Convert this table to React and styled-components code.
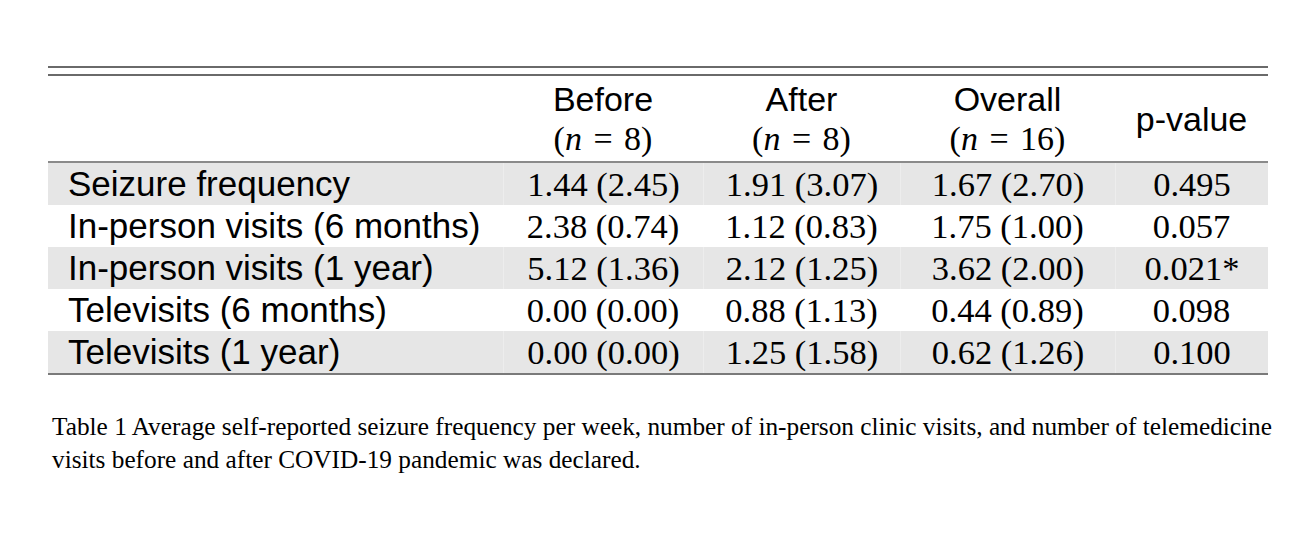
import React from "react";
import styled, { createGlobalStyle } from "styled-components";

const GlobalStyle = createGlobalStyle`
  html, body {
    margin: 0;
    padding: 0;
    background: #ffffff;
  }
  body {
    font-family: "Liberation Serif", "Times New Roman", serif;
    color: #000;
  }
`;

const rows = [
  { label: "Seizure frequency", before: "1.44 (2.45)", after: "1.91 (3.07)", overall: "1.67 (2.70)", p: "0.495" },
  { label: "In-person visits (6 months)", before: "2.38 (0.74)", after: "1.12 (0.83)", overall: "1.75 (1.00)", p: "0.057" },
  { label: "In-person visits (1 year)", before: "5.12 (1.36)", after: "2.12 (1.25)", overall: "3.62 (2.00)", p: "0.021*" },
  { label: "Televisits (6 months)", before: "0.00 (0.00)", after: "0.88 (1.13)", overall: "0.44 (0.89)", p: "0.098" },
  { label: "Televisits (1 year)", before: "0.00 (0.00)", after: "1.25 (1.58)", overall: "0.62 (1.26)", p: "0.100" },
];

const groups = [
  { name: "Before", n: "8" },
  { name: "After", n: "8" },
  { name: "Overall", n: "16" },
];

const Page = styled.main`
  padding: 66px 0 0 48px;
  width: 1268px;
`;

const Table = styled.div`
  width: 1220px;
  display: grid;
  grid-template-columns: 455px 200px 197px 215px 153px;
  border-bottom: 2px solid #7a7a7a;
`;

const DoubleRule = styled.div`
  grid-column: 1 / -1;
  height: 6px;
  border-top: 2px solid #6a6a6a;
  border-bottom: 2px solid #6a6a6a;
`;

const HeadCell = styled.div`
  height: 83px;
  border-bottom: 2px solid #8a8a8a;
  display: flex;
  flex-direction: column;
  align-items: center;
  justify-content: center;
  padding-top: 2px;
`;

const HeadName = styled.span`
  font-family: "Liberation Sans", Arial, sans-serif;
  font-size: 34px;
  line-height: 39px;
`;

const HeadCount = styled.span`
  font-family: "Liberation Serif", "Times New Roman", serif;
  font-size: 34px;
  line-height: 40px;
  word-spacing: 3px;

  i {
    font-style: italic;
  }
`;

const Cell = styled.div`
  height: 42px;
  display: flex;
  align-items: center;
  justify-content: ${(p) => (p.$label ? "flex-start" : "center")};
  padding-left: ${(p) => (p.$label ? "20px" : "0")};
  background: ${(p) => (p.$shade ? "#e6e6e6" : "#ffffff")};
  border-left: ${(p) => (p.$label || !p.$shade ? "none" : "1px solid #ededed")};
  font-family: ${(p) =>
    p.$label ? '"Liberation Sans", Arial, sans-serif' : '"Liberation Serif", "Times New Roman", serif'};
  font-size: ${(p) => (p.$label ? "35px" : "34.5px")};
  white-space: nowrap;
`;

const Caption = styled.p`
  margin: 35px 0 0 4px;
  width: 1240px;
  font-family: "Liberation Serif", "Times New Roman", serif;
  font-size: 25.3px;
  line-height: 33px;
  white-space: nowrap;
`;

export default function App() {
  return (
    <>
      <GlobalStyle />
      <Page>
        <Table>
          <DoubleRule />
          <HeadCell />
          {groups.map((g) => (
            <HeadCell key={g.name}>
              <HeadName>{g.name}</HeadName>
              <HeadCount>
                (<i>n</i> = {g.n})
              </HeadCount>
            </HeadCell>
          ))}
          <HeadCell>
            <HeadName>p-value</HeadName>
          </HeadCell>

          {rows.map((r, i) => {
            const shade = i % 2 === 0;
            return (
              <React.Fragment key={r.label}>
                <Cell $label $shade={shade}>{r.label}</Cell>
                <Cell $shade={shade}>{r.before}</Cell>
                <Cell $shade={shade}>{r.after}</Cell>
                <Cell $shade={shade}>{r.overall}</Cell>
                <Cell $shade={shade}>{r.p}</Cell>
              </React.Fragment>
            );
          })}
        </Table>
        <Caption>
          Table 1 Average self-reported seizure frequency per week, number of in-person clinic visits, and number of telemedicine
          <br />
          visits before and after COVID-19 pandemic was declared.
        </Caption>
      </Page>
    </>
  );
}
